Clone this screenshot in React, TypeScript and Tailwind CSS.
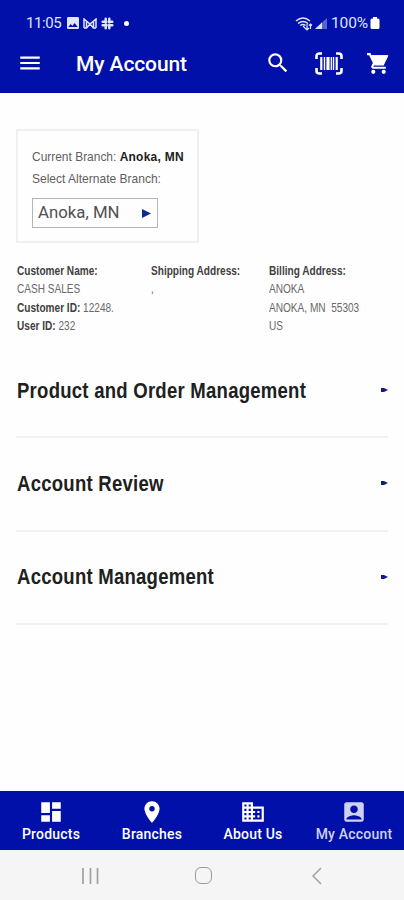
import type { ReactNode } from "react";
import {
  MdAccountBox,
  MdBusiness,
  MdDashboard,
  MdImage,
  MdLocationOn,
  MdMenu,
  MdSearch,
} from "react-icons/md";

const SECTIONS = ["Product and Order Management", "Account Review", "Account Management"];

const TABS = [
  { label: "Products", icon: MdDashboard },
  { label: "Branches", icon: MdLocationOn },
  { label: "About Us", icon: MdBusiness },
  { label: "My Account", icon: MdAccountBox, active: true },
];

// Narrow grotesque set from the regular-width face
function Narrow({ children, className = "" }: { children: ReactNode; className?: string }) {
  return (
    <span className={`inline-block origin-left whitespace-pre font-['Liberation_Sans',Arial,sans-serif] ${className}`}>
      {children}
    </span>
  );
}

function StatusBar() {
  return (
    <div className="flex h-[46px] items-center justify-between pl-[26px] pr-[24px] text-[#dfe4ff]">
      <div className="flex items-center">
        <span className="w-[38px] text-[15px] tracking-[-0.4px]">11:05</span>
        <MdImage className="ml-[1px] h-[16px] w-[16px]" />
        <svg className="ml-[2px] h-[11px] w-[14px]" viewBox="0 0 14 11" fill="none" stroke="currentColor" strokeWidth="1.5">
          <path d="M1 10V1l6 5 6-5v9M1 10h2.5V3.5M13 10h-2.5V3.5M3.5 10 7 6l3.5 4" />
        </svg>
        <svg className="ml-[4px] h-[13px] w-[13px]" viewBox="0 0 13 13" fill="none" stroke="currentColor" strokeWidth="2.5" strokeLinecap="round">
          <path d="M4.7 1.7v4M1.7 4.7h3M8.3 1.7v3M7.5 4.7h3.8M8.3 7.5v3.8M8.3 8.3h3M1.7 8.3h4M4.7 8.3v3" />
        </svg>
        <span className="ml-[10px] h-[5px] w-[5px] rounded-full bg-white" />
      </div>
      <div className="flex items-center">
        <svg className="h-[15px] w-[18px]" viewBox="0 0 18 15" fill="none" stroke="currentColor" strokeWidth="1.5">
          <path d="M1 5Q8 -1 15 5M3 7.5q5-4 10 0M5.2 9.5q2.8-2 5.2 0" />
          <path d="m8 10 2 2M12 8v6m-2-2 2 2 2-2M15.5 13V8m-1.5 1.5L15.5 8 17 9.5" strokeWidth="1.2" />
        </svg>
        <svg className="ml-[2px] h-[11px] w-[12px]" viewBox="0 0 12 11">
          <path d="M0 11 12 0v11Z" fill="#5267cb" />
          <path d="M0 11 7 4.6V11Z" fill="#dfe4ff" />
        </svg>
        <span className="ml-[4px] w-[39px] pt-px text-[15.5px] tracking-[-0.1px]">100%</span>
        <svg className="h-[12px] w-[10px]" viewBox="0 0 10 12" fill="white">
          <path d="M3 0h4v1.5h1q1.5 0 1.5 1.5v7.5Q9.5 12 8 12H2Q.5 12 .5 10.5V3Q.5 1.5 2 1.5h1Z" />
        </svg>
      </div>
    </div>
  );
}

function AppBar() {
  return (
    <div className="flex h-[47px] items-center pb-[13px] pl-[17px] pr-[13px] text-white">
      <MdMenu className="h-[26px] w-[26px]" />
      <h1 className="ml-[33px] pt-[2px] text-[21px] font-medium leading-6 tracking-[-0.1px]">My Account</h1>
      <MdSearch className="ml-auto h-[26px] w-[26px]" />
      <svg className="ml-[24px] h-[23px] w-[28px]" viewBox="0 0 28 23" fill="none" stroke="white">
        <path d="M7 1.5H4.5Q1.5 1.5 1.5 4v3M21 1.5h2.5q3 0 3 2.5v3M1.5 16v3q0 2.5 3 2.5H7M26.5 16v3q0 2.5-3 2.5H21" strokeWidth="2.6" />
        <path d="M6.3 5v13M21.7 5v13" strokeWidth="2.2" />
        <path d="M9.5 5v13M18.5 5v13" strokeWidth="1.4" />
        <path d="M13 5v13" strokeWidth="3.2" />
        <path d="M16.3 5v13" strokeWidth="1.3" />
      </svg>
      <svg className="ml-[23px] h-[25px] w-[25px]" viewBox="0 0 24 24" fill="white">
        <path d="M5.2 4H21.500L17 14H8Z" />
        <path d="M7 18a2 2 0 1 0 0 4 2 2 0 0 0 0-4ZM1 2v2h2l3.6 7.59-1.35 2.45C4.52 15.37 5.48 17 7 17h12v-2H7.42a.25.25 0 0 1-.22-.37L8.1 13h7.45c.75 0 1.41-.41 1.75-1.03l3.58-6.49A1 1 0 0 0 20 4H5.21l-.94-2H1Zm16 16a2 2 0 1 0 0 4 2 2 0 0 0 0-4Z" />
      </svg>
    </div>
  );
}

function BranchCard() {
  return (
    <div className="h-[114px] w-[183px] border-2 border-[#f0f0f0] pl-[14px] pt-[14px] text-[13.5px] text-[#606060]">
      <div className="h-[22px] leading-[22px]">
        <Narrow className="scale-x-[0.885]">
          Current Branch: <b className="tracking-[0.3px] text-[#202020]">Anoka, MN</b>
        </Narrow>
      </div>
      <div className="h-[22px] leading-[22px]">
        <Narrow className="scale-x-[0.89]">Select Alternate Branch:</Narrow>
      </div>
      <button className="mt-[9px] flex h-[30px] w-[126px] items-center justify-between border border-[#b5b5b5] pl-[5px] pr-[6px] text-[16.8px] text-[#505050]">
        Anoka, MN
        <svg className="h-[9px] w-[9px]" viewBox="0 0 9 9" fill="#0a2b91">
          <path d="M0 0 9 4.5 0 9Z" />
        </svg>
      </button>
    </div>
  );
}

function Line({ label, children }: { label?: string; children?: ReactNode }) {
  return (
    <div className="h-[18.3px] leading-[18.3px]">
      <Narrow className="scale-x-[0.84]">
        {label && <b className="text-[#404040]">{label}</b>}
        {children}
      </Narrow>
    </div>
  );
}

function CustomerDetails() {
  return (
    <div className="mt-[19px] grid h-[74px] grid-cols-[134px_118px_1fr] pl-px text-[12px] text-[#686868]">
      <div>
        <Line label="Customer Name:" />
        <Line>CASH SALES</Line>
        <Line label="Customer ID:"> 12248.</Line>
        <Line label="User ID:"> 232</Line>
      </div>
      <div>
        <Line label="Shipping Address:" />
        <Line>,</Line>
      </div>
      <div>
        <Line label="Billing Address:" />
        <Line>ANOKA</Line>
        <Line>{"ANOKA, MN  55303"}</Line>
        <Line>US</Line>
      </div>
    </div>
  );
}

export default function App() {
  return (
    <div className="flex h-[900px] w-[404px] flex-col overflow-hidden bg-[#fefefe] font-[Roboto,sans-serif]">
      <header className="h-[93px] bg-[#0010a8]">
        <StatusBar />
        <AppBar />
      </header>

      <main className="flex-1 px-[16px] pt-[36px]">
        <BranchCard />
        <CustomerDetails />
        <div className="mt-[9px]">
          {SECTIONS.map((title) => (
            <div key={title} className="flex h-[93.3px] items-center justify-between border-b-2 border-[#f2f2f2] pb-px pl-px">
              <h2 className="text-[22px] text-[#202020]">
                <Narrow className="scale-x-[0.842] font-bold tracking-[0.3px]">{title}</Narrow>
              </h2>
              <svg className="h-[4px] w-[7px]" viewBox="0 0 7 4" fill="#101b8c">
                <path d="M0 0h3L7 2 3 4H0Z" />
              </svg>
            </div>
          ))}
        </div>
      </main>

      <nav className="grid h-[59px] grid-cols-4 bg-[#0010a8]">
        {TABS.map(({ label, icon: Icon, active }) => (
          <div key={label} className={`flex flex-col items-center pl-px pt-[8px] ${active ? "text-[#cfd2ee]" : "text-white"}`}>
            <Icon className="h-[26px] w-[26px]" />
            <span className="text-[14px] font-medium leading-[19px] tracking-[0.2px]">{label}</span>
          </div>
        ))}
      </nav>

      <div className="flex h-[50px] items-center bg-[#f5f5f5] pl-[82px] pt-px text-[#a0a0a0]">
        <svg className="h-[16px] w-[17px]" viewBox="0 0 17 16" stroke="currentColor" strokeWidth="1.7">
          <path d="M1 0v16M8.5 0v16M15.5 0v16" />
        </svg>
        <span className="ml-[96px] h-[17px] w-[17px] rounded-[6px] border-[1.5px] border-[#999]" />
        <svg className="ml-[100px] h-[18px] w-[10px]" viewBox="0 0 10 18" fill="none" stroke="currentColor" strokeWidth="1.5">
          <path d="M9 1 1 9l8 8" />
        </svg>
      </div>
    </div>
  );
}
